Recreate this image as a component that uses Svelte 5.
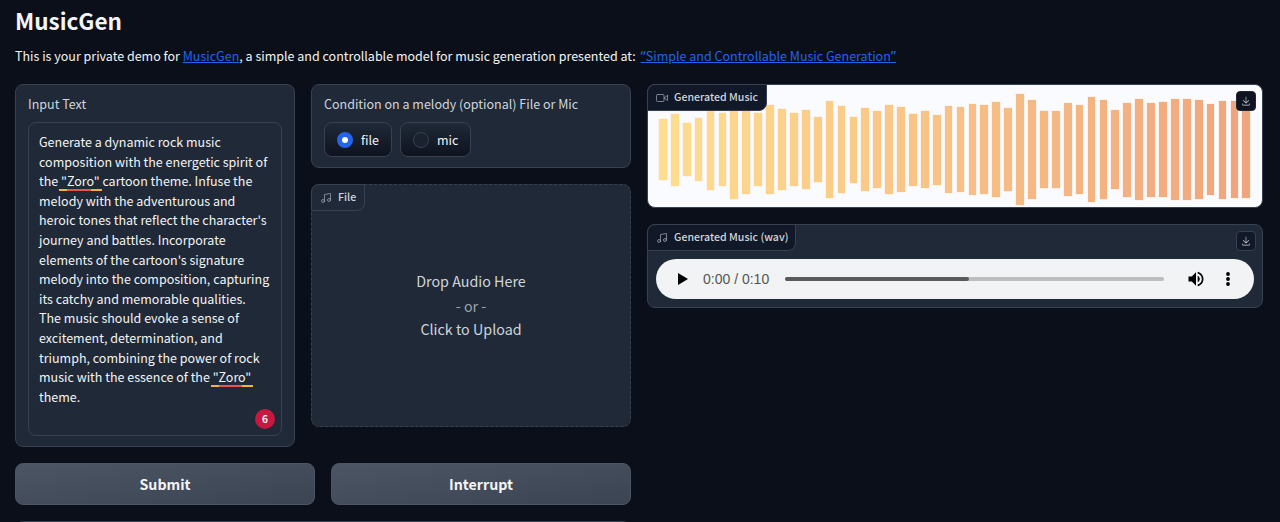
<script>
  const raw = [[130,315],[114,330],[143,302],[128,316],[101,344],[113,332],[75,370],[88,357],[113,330],[90,355],[102,343],[112,333],[103,341],[125,319],[78,367],[91,354],[123,321],[98,347],[107,338],[88,357],[95,350],[114,330],[107,338],[117,327],[92,353],[96,350],[87,358],[90,355],[79,366],[98,347],[55,389],[75,371],[107,338],[107,338],[83,362],[90,355],[65,381],[75,371],[104,341],[81,363],[70,374],[81,363],[80,364],[71,373],[70,374],[73,372],[85,360],[75,369],[77,368],[77,368]];
  const from = [254, 221, 142];
  const to = [240, 165, 125];
  const bars = raw.map(([a, b], i) => {
    const t = i / (raw.length - 1);
    const c = from.map((v, k) => Math.round(v + (to[k] - v) * t));
    return { h: (b - a) / 3, color: `rgb(${c.join(',')})` };
  });
  const prompt = `Generate a dynamic rock music composition with the energetic spirit of the `;
  const mid1 = ` cartoon theme. Infuse the melody with the adventurous and heroic tones that reflect the character's journey and battles. Incorporate elements of the cartoon's signature melody into the composition, capturing its catchy and memorable qualities.`;
  const mid2 = `The music should evoke a sense of excitement, determination, and triumph, combining the power of rock music with the essence of the `;
</script>

{#snippet music()}
  <svg class="chip-icon" viewBox="0 0 24 24" fill="none" stroke="currentColor" stroke-width="1.5" stroke-linecap="round" stroke-linejoin="round"><path d="M9 18V5l12-2v13"/><circle cx="6" cy="18" r="3"/><circle cx="18" cy="16" r="3"/></svg>
{/snippet}
{#snippet download()}
  <svg class="dl-icon" viewBox="0 0 32 32"><path fill="currentColor" d="M26 24v4H6v-4H4v4a2 2 0 0 0 2 2h20a2 2 0 0 0 2-2v-4zm0-10l-1.41-1.41L17 20.17V2h-2v18.17l-7.59-7.58L6 14l10 10l10-10z"/></svg>
{/snippet}

<div class="page">
  <h1>MusicGen</h1>
  <p class="intro">This is your private demo for <a href="#top">MusicGen</a>, a simple and controllable model for music generation presented at: <a class="paper" href="#top"><span class="q">“</span>Simple and Controllable Music Generation<span class="q">”</span></a></p>

  <div class="main">
    <div class="left">
      <div class="inputs">
        <section class="card text-card">
          <div class="label">Input Text</div>
          <div class="textarea">
            {prompt}<span class="spell">"Zoro"</span>{mid1}<br>{mid2}<span class="spell">"Zoro"</span> theme.
            <span class="badge">6</span>
          </div>
        </section>
        <div class="melody">
          <section class="card radio-card">
            <div class="label">Condition on a melody (optional) File or Mic</div>
            <div class="radios">
              <div class="radio"><span class="dot on"></span>file</div>
              <div class="radio"><span class="dot"></span>mic</div>
            </div>
          </section>
          <section class="card drop">
            <div class="chip file-chip">{@render music()}File</div>
            <div class="drop-text">
              <div>Drop Audio Here</div>
              <div class="or">- or -</div>
              <div>Click to Upload</div>
            </div>
          </section>
        </div>
      </div>
      <div class="buttons">
        <button>Submit</button>
        <button>Interrupt</button>
      </div>
      <section class="card next"></section>
    </div>

    <div class="right">
      <section class="video">
        <div class="chip video-chip">
          <svg class="chip-icon" viewBox="0 0 24 24" fill="none" stroke="currentColor" stroke-width="1.5" stroke-linecap="round" stroke-linejoin="round"><polygon points="23 7 16 12 23 17 23 7"/><rect x="1" y="5" width="15" height="14" rx="2" ry="2"/></svg>
          Generated Music
        </div>
        <button class="dl dark">{@render download()}</button>
        <div class="wave">
          {#each bars as b}
            <i style="height:{b.h}px;background:{b.color}"></i>
          {/each}
        </div>
      </section>
      <section class="card audio">
        <div class="chip audio-chip">{@render music()}Generated Music (wav)</div>
        <button class="dl">{@render download()}</button>
        <div class="player">
          <svg class="play" viewBox="0 0 10 12"><path d="M0 0l10 6l-10 6z"/></svg>
          <span class="time">0:00 / 0:10</span>
          <div class="track"><div class="fill"></div></div>
          <svg class="vol" viewBox="0 0 24 24"><path d="M3 9v6h4l5 5V4L7 9H3zm13.5 3c0-1.77-1.02-3.29-2.5-4.03v8.05c1.48-.73 2.5-2.25 2.5-4.02zM14 3.23v2.06c2.89.86 5 3.54 5 6.71s-2.11 5.85-5 6.71v2.06c4.01-.91 7-4.49 7-8.77s-2.99-7.86-7-8.77z"/></svg>
          <svg class="more" viewBox="0 0 4 14"><circle cx="2" cy="2" r="1.9"/><circle cx="2" cy="7" r="1.9"/><circle cx="2" cy="12" r="1.9"/></svg>
        </div>
      </section>
    </div>
  </div>
</div>

<style>
  :global(body) {
    margin: 0;
    background: #0b0f19;
    overflow: hidden;
  }
  .page {
    height: 522px;
    overflow: hidden;
    box-sizing: border-box;
    padding: 0 17px 0 15px;
    color: #f3f4f6;
    font-family: "Noto Sans CJK SC", "Noto Sans", sans-serif;
    font-size: 12.5px;
  }
  h1 {
    margin: 0;
    padding-top: 5px;
    font-size: 22.5px;
    line-height: 30px;
    font-weight: 600;
    color: #f3f4f6;
  }
  .intro {
    margin: 11px 0 0;
    line-height: 20px;
    height: 38px;
  }
  a { color: #2563eb; text-decoration: underline; }
  .paper { margin-left: 2px; }
  .q { font-family: "Noto Sans", sans-serif; font-size: 14.5px; line-height: 1; }
  .main { display: flex; gap: 16px; align-items: flex-start; }
  .left { width: 616px; flex: none; }
  .right { flex: 1; min-width: 0; display: flex; flex-direction: column; gap: 16px; }
  .inputs { display: flex; gap: 16px; align-items: flex-start; }
  .card {
    position: relative;
    box-sizing: border-box;
    background: #1f2937;
    border: 1px solid #374151;
    border-radius: 8px;
  }
  .label { line-height: 20px; color: #d1d5db; }
  .text-card { width: 280px; height: 363px; padding: 9px 12px; }
  .textarea {
    position: relative;
    box-sizing: border-box;
    margin-top: 8px;
    height: 314px;
    padding: 9px 10px;
    border: 1px solid #374151;
    border-radius: 8px;
    line-height: 19.6px;
    color: #f3f4f6;
  }
  .spell {
    padding: 0 2px 1px;
    margin: 0 -2px;
    background:
      linear-gradient(90deg, #f5b042 0 19%, #e8554e 19% 74%, #f5b042 74% 100%) no-repeat left bottom / 100% 2px;
  }
  .badge {
    position: absolute;
    right: 6px;
    bottom: 6px;
    width: 20px;
    height: 20px;
    border-radius: 50%;
    background: #c9183f;
    color: #fff;
    font-size: 10px;
    font-weight: 700;
    line-height: 20px;
    text-align: center;
  }
  .melody { flex: 1; min-width: 0; display: flex; flex-direction: column; gap: 16px; }
  .radio-card { height: 84px; padding: 9px 12px; }
  .radios { display: flex; gap: 8px; margin-top: 8px; }
  .radio {
    display: flex;
    align-items: center;
    gap: 8px;
    box-sizing: border-box;
    height: 35px;
    padding: 0 12px;
    border: 1px solid #374151;
    border-radius: 8px;
    background: linear-gradient(180deg, #1f2937, #0e131f);
    color: #f3f4f6;
  }
  .dot {
    box-sizing: border-box;
    width: 16px;
    height: 16px;
    border-radius: 50%;
    border: 1px solid #374151;
    background: #1a2230;
  }
  .dot.on {
    border: 5px solid #2563eb;
    background: #fff;
  }
  .drop { height: 243px; border-style: dashed; }
  .chip {
    position: absolute;
    top: -1px;
    left: -1px;
    display: flex;
    align-items: center;
    gap: 6px;
    box-sizing: border-box;
    height: 27px;
    padding: 0 8px 2px;
    border: 1px solid #374151;
    border-radius: 8px 0 8px 0;
    font-size: 10.6px;
    font-weight: 500;
    color: #d1d5db;
    white-space: nowrap;
  }
  .chip-icon { width: 12px; height: 12px; color: #9ca3af; flex: none; margin-top: 2px; }
  .file-chip { width: 54px; background: #1f2937; }
  .drop-text {
    height: 100%;
    display: flex;
    flex-direction: column;
    justify-content: center;
    align-items: center;
    font-size: 14.3px;
    line-height: 24px;
    color: #d1d5db;
    padding-bottom: 1px;
    box-sizing: border-box;
  }
  .or { color: #9ca3af; padding-top: 1px; margin-bottom: -1px; }
  .buttons { display: flex; gap: 16px; margin-top: 16px; }
  .buttons button {
    flex: 1;
    height: 42px;
    border: 1px solid #4b5563;
    border-radius: 8px;
    background: linear-gradient(to bottom right, #4b5563, #3a4452);
    color: #f3f4f6;
    font: 600 14.2px "Noto Sans CJK SC", sans-serif;
    padding: 0;
  }
  .next { margin-top: 16px; height: 80px; }
  .video {
    position: relative;
    box-sizing: border-box;
    height: 124px;
    background: #fafbff;
    border: 1px solid #374151;
    border-radius: 8px;
  }
  .video-chip {
    width: 120px;
    height: 27px;
    background: #111827;
    color: #d1d5db;
  }
  .wave {
    box-sizing: border-box;
    height: 100%;
    display: flex;
    align-items: center;
    gap: 4.2px;
    padding: 7px 0 0 11px;
  }
  .wave i {
    display: block;
    flex: none;
    width: 7.72px;
    box-shadow: 0 0 0 0.5px rgba(255, 225, 190, 0.6);
  }
  .dl {
    position: absolute;
    top: 6px;
    right: 6px;
    width: 20px;
    height: 20px;
    padding: 0;
    display: flex;
    align-items: center;
    justify-content: center;
    box-sizing: border-box;
    background: #111827;
    border: 1px solid #374151;
    border-radius: 4px;
    color: #d1d5db;
  }
  .dl.dark { background: #0f1420; border-color: #1f2937; z-index: 1; }
  .dl-icon { width: 10px; height: 10px; }
  .audio { height: 84px; padding: 34px 8px 0; }
  .audio-chip { width: 149px; height: 27px; background: #111827; }
  .player {
    display: flex;
    align-items: center;
    box-sizing: border-box;
    height: 40px;
    border-radius: 20px;
    background: #f1f3f4;
    padding-left: 22px;
  }
  .play { width: 10px; height: 12px; fill: #000; flex: none; }
  .time {
    margin-left: 15px;
    width: 82px;
    flex: none;
    font: 14px "Liberation Sans", sans-serif;
    color: #555;
  }
  .track { width: 379px; height: 4px; border-radius: 2px; background: #bdbdbd; flex: none; }
  .fill { width: 184px; height: 100%; border-radius: 2px; background: #5a5a5a; }
  .vol { width: 20px; height: 20px; fill: #000; margin-left: 22px; flex: none; }
  .more { width: 4px; height: 14px; fill: #000; margin-left: 20px; flex: none; }
</style>
